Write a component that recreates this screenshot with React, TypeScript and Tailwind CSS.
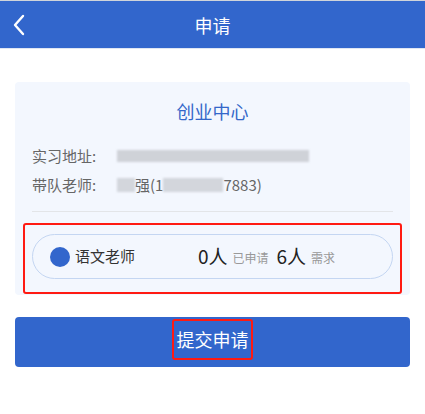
import React from 'react';

const font = { fontFamily: '"Noto Sans CJK SC", "Noto Sans", sans-serif' };

export default function App() {
  return (
    <div className="w-[425px] h-[414px] bg-white" style={font}>
      <header className="border-t border-[#d0d4da] bg-[#3266cc] h-[49px] flex items-center relative border-b border-b-[#dfe6f3]">
        <svg className="absolute left-[12px] top-[13px]" width="14" height="22" viewBox="0 0 14 22">
          <path d="M11 2 L3 11 L11 20" stroke="white" strokeWidth="2.4" fill="none" strokeLinecap="round" strokeLinejoin="round" />
        </svg>
        <h1 className="w-full text-center text-white text-[18px] leading-none">申请</h1>
      </header>

      <main className="px-[15px] pt-[33px]">
        <div className="bg-[#f3f7fe] rounded-[4px] pt-[16px] pb-[1px]">
          <h2 className="text-center text-[#3467c9] text-[18px] leading-[26px]">创业中心</h2>
          <div className="px-[17px] mt-[17px] text-[15px] text-[#666] leading-[29px]">
            <div className="flex items-center">
              <span className="w-[85px]">实习地址:</span>
              <span className="h-[12px] w-[192px] bg-[#cfd2d8] blur-[1px]" />
            </div>
            <div className="flex items-center">
              <span className="w-[85px]">带队老师:</span>
              <span className="h-[14px] w-[18px] bg-[#d3d6dc] blur-[1px]" />
              <span>强(1</span>
              <span className="h-[14px] w-[60px] bg-[#d3d6dc] blur-[1px]" />
              <span>7883)</span>
            </div>
            <div className="border-b border-[#e3e5e8] mt-[12px]" />
          </div>

          <div className="mx-[8px] mt-[11px] border-[2px] border-[#ff1a12] rounded-[3px] px-[7px] pt-[9px] pb-[13px]">
            <div className="h-[45px] rounded-full border border-[#c4d6f2] flex items-center pl-[17px]">
              <span className="w-[20px] h-[20px] rounded-full bg-[#3266cc]" />
              <span className="ml-[5px] text-[15px] text-[#333] w-[123px]">语文老师</span>
              <span className="text-[19px] text-[#222]">0人</span>
              <span className="ml-[5px] text-[12px] text-[#999] mt-[3px]">已申请</span>
              <span className="ml-[8px] text-[19px] text-[#222]">6人</span>
              <span className="ml-[5px] text-[12px] text-[#999] mt-[3px]">需求</span>
            </div>
          </div>
        </div>

        <button className="mt-[22px] w-full h-[50px] bg-[#3266cc] rounded-[4px] flex items-center justify-center">
          <span className="border-[2px] border-[#ff1a12] rounded-[3px] h-[41px] w-[81px] flex items-center justify-center text-white text-[18px] -mt-[6px]">
            提交申请
          </span>
        </button>
      </main>
    </div>
  );
}
